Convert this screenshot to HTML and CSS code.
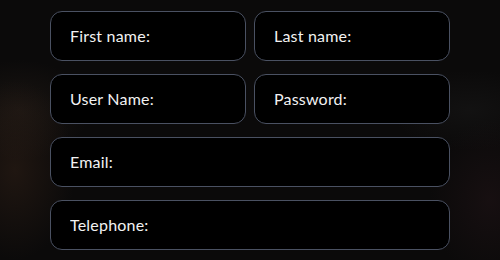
FILE: index.html
```html
<!DOCTYPE html>
<html lang="en">

<head>
    <meta charset="UTF-8">
    <meta name="viewport" content="width=device-width, initial-scale=1.0">
    <title>Register</title>
    <link rel="stylesheet" href="styles.css">
</head>

<body>
    <div class="backdrop">
        <form class="register-form">
            <div class="form-row">
                <input class="form-field" type="text" name="firstname" placeholder="First name:">
                <input class="form-field" type="text" name="lastname" placeholder="Last name:">
            </div>
            <div class="form-row">
                <input class="form-field" type="text" name="username" placeholder="User Name:">
                <input class="form-field" type="password" name="password" placeholder="Password:">
            </div>
            <input class="form-field" type="email" name="email" placeholder="Email:">
            <input class="form-field" type="tel" name="telephone" placeholder="Telephone:">
        </form>
    </div>
</body>

</html>
```

FILE: styles.css
```css
body {
    margin: 0;
    font-family: Lato, "Open Sans", sans-serif;
    background-color: #0b0a0a;
}

.backdrop {
    height: 260px;
    padding-top: 11px;
    box-sizing: border-box;
    background:
        radial-gradient(ellipse 60px 90px at 15px 170px, rgba(70, 45, 30, 0.35), transparent),
        radial-gradient(ellipse 70px 50px at 20px 110px, rgba(60, 45, 35, 0.3), transparent),
        radial-gradient(ellipse 60px 80px at 490px 200px, rgba(45, 25, 30, 0.35), transparent),
        radial-gradient(ellipse 80px 40px at 470px 110px, rgba(35, 35, 35, 0.3), transparent),
        #0b0a0a;
}

.register-form {
    width: 400px;
    margin: 0 auto;
    display: flex;
    flex-direction: column;
    gap: 13px;
}

.form-row {
    display: grid;
    grid-template-columns: 1fr 1fr;
    gap: 8px;
}

.form-field {
    height: 50px;
    box-sizing: border-box;
    width: 100%;
    padding: 0 19px 2px;
    background-color: #000;
    border: 1.5px solid #4a5162;
    border-radius: 12px;
    color: #fff;
    font-family: inherit;
    font-size: 16px;
    letter-spacing: 0.2px;
    outline: none;
}

.form-field::placeholder {
    color: #f2f2f2;
    opacity: 1;
}
```
